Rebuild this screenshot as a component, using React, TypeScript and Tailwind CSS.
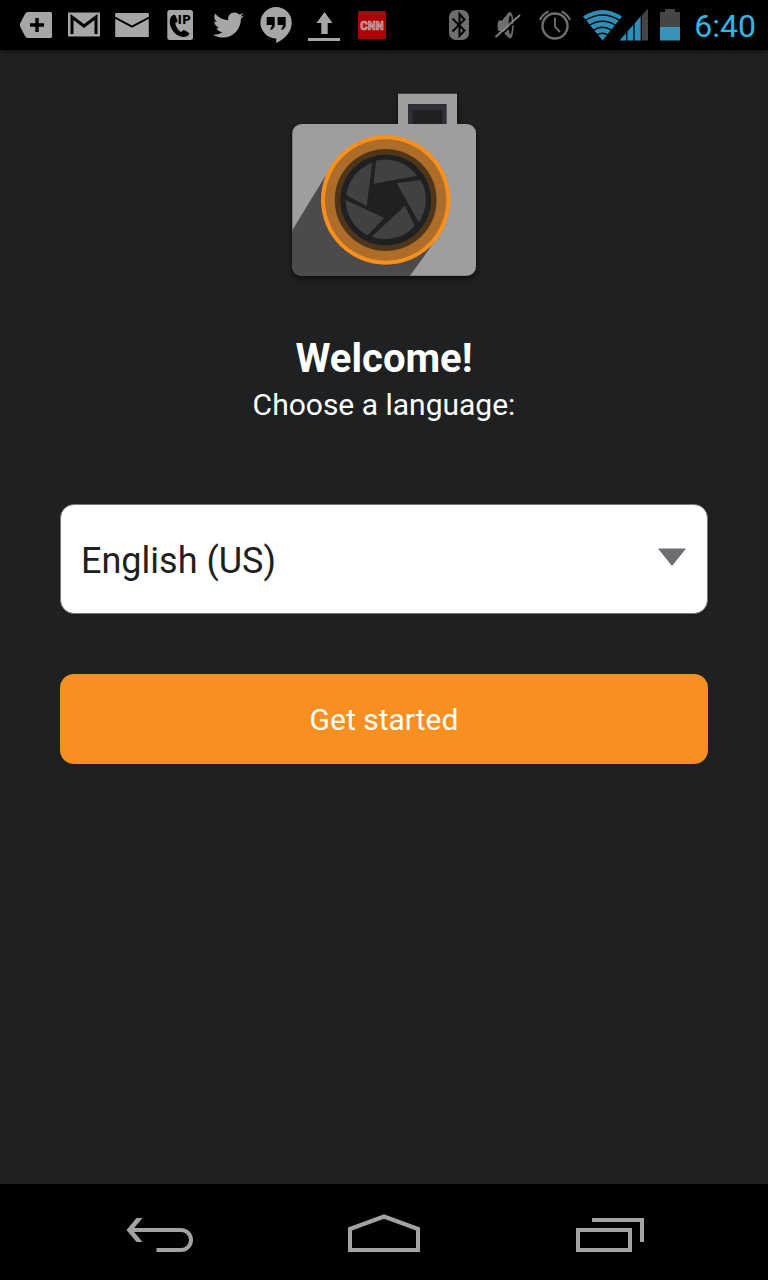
import { useState } from "react";
import type { ReactNode } from "react";
import { FaTwitter } from "react-icons/fa";

const LANGUAGES = ["English (US)", "English (UK)", "Español", "Français", "Deutsch"];

function StatusIcon({ label, children }: { label: string; children: ReactNode }) {
  return (
    <svg viewBox="0 0 48 50" className="h-[50px] w-12 shrink-0" role="img" aria-label={label}>
      {children}
    </svg>
  );
}

function StatusBar() {
  return (
    <header className="flex h-[50px] items-center justify-between bg-black px-3 shadow-md shadow-black/30">
      <div className="flex text-[#a6a6a6]">
        <StatusIcon label="Label added">
          <path d="M15.5 12H38.5Q40 12 40 13.5V36.500Q40 38 38.500 38H15.500Q14 38 13 36L8.300 27Q7.600 25 8.300 23L13 14Q14 12 15.500 12Z" fill="currentColor" />
          <path d="M25 18V32M18 25H32" stroke="#000" strokeWidth="3.400" />
        </StatusIcon>
        <StatusIcon label="Gmail">
          <rect x="8" y="12.500" width="32" height="24" fill="currentColor" />
          <path d="M12 34V17L24 26L36 17V34" fill="none" stroke="#000" strokeWidth="3" />
        </StatusIcon>
        <StatusIcon label="Mail">
          <rect x="7.200" y="13" width="33.600" height="24" fill="currentColor" />
          <path d="M7 17.700L24 26.600L41 17.700" fill="none" stroke="#000" strokeWidth="2" />
        </StatusIcon>
        <StatusIcon label="IP call">
          <rect x="11.300" y="10" width="25.700" height="30" rx="2.500" fill="currentColor" />
          <path d="M17.200 15C13.200 17 12.700 23 15.500 28.500C18.800 35 25 38.300 31 36.300L33 34.700Q33.800 33.600 32.600 32.700L28.700 30.200Q27.600 29.600 26.700 30.600L25.500 32C22.500 31 19.600 26.500 19.300 23L20.900 22.200Q21.900 21.600 21.500 20.400L19.600 15.800Q18.900 14.300 17.200 15Z" fill="#000" />
          <text x="21.500" y="24" fontSize="12" fontWeight="700" fill="#000" className="font-['DejaVu_Sans',sans-serif]">IP</text>
        </StatusIcon>
        <StatusIcon label="Twitter">
          <FaTwitter x="9" y="9.500" size={31} />
        </StatusIcon>
        <StatusIcon label="Hangouts">
          <path d="M24 7A15.700 15.700 0 0 1 39.700 22.700C39.700 31.500 33.500 38.500 24.300 43V38.400A15.700 15.700 0 0 1 24 7Z" fill="currentColor" />
          <path d="M14.700 17H22.700V25Q22.700 28.500 18.500 30V28.200Q20 27 20 25H14.700ZM25.600 17H33.700V25Q33.700 28.500 29.500 30V28.200Q31 27 31 25H25.600Z" fill="#000" />
        </StatusIcon>
        <StatusIcon label="Upload">
          <path d="M24.500 12L32.500 23H27.700V34H21.300V23H16.500ZM8 38H40V41H8Z" fill="currentColor" />
        </StatusIcon>
        <StatusIcon label="CNN">
          <rect x="10" y="11" width="28" height="28" rx="1.500" fill="#ad0000" />
          <text x="24" y="29.500" fontSize="13" fontWeight="700" textAnchor="middle" fill="#b07070" className="font-['Roboto_Condensed',Roboto,sans-serif]" stroke="#d0b0b0" strokeWidth="0.700">CNN</text>
        </StatusIcon>
      </div>
      <div className="flex items-center">
        <div className="flex text-[#6e6e6e]">
          <StatusIcon label="Bluetooth">
            <rect x="14" y="10" width="20" height="30" rx="7" fill="currentColor" />
            <path d="M17.500 18.500L29.500 30.500L24.500 36V14L29.500 19.500L17.500 31.500" fill="none" stroke="#000" strokeWidth="2" />
          </StatusIcon>
          <StatusIcon label="Muted">
            <path d="M15.500 20.500H19L25.500 12.500Q28 11 29.500 15Q32 25 29.500 35.500Q28 40 25.500 37.500L19 31H15.500Q13.500 26 15.500 20.500Z" fill="currentColor" />
            <ellipse cx="27.300" cy="25" rx="1.700" ry="9.500" fill="#000" />
            <path d="M14 38.500L39 16.500" stroke="#000" strokeWidth="1.600" />
            <path d="M12.500 37L37 15" stroke="#858585" strokeWidth="1.900" />
          </StatusIcon>
          <StatusIcon label="Alarm">
            <circle cx="24" cy="26" r="12.500" fill="none" stroke="currentColor" strokeWidth="2.400" />
            <path d="M24 17.500V27L29 32" fill="none" stroke="currentColor" strokeWidth="1.800" />
            <path d="M9 20Q11 14.500 17.500 11.500M39 20Q37 14.500 30.500 11.500" fill="none" stroke="currentColor" strokeWidth="2" />
          </StatusIcon>
        </div>
        <svg viewBox="579 0 74 50" className="h-[50px] w-[74px]" role="img" aria-label="Wi-Fi and signal strength">
          <path d="M583 16.500Q602.500 3.500 622 16.500L602.500 40.500Z" fill="#2c8fb8" />
          <path d="M585 20.500Q602.500 9.500 620 20.500M589 25.500Q602.500 17 616 25.500M593 30.500Q602.500 24 612 30.500M597 35Q602.500 31.500 608 35" fill="none" stroke="#000" strokeWidth="1.300" />
          <path d="M619.500 40.500L641 16V40.500Z" fill="#2c8fb8" />
          <path d="M642 15L648 8.500V40.500H642Z" fill="#444" />
          <path d="M626.800 20V41M634 15V41M641.300 10V41" stroke="#000" strokeWidth="1.200" />
        </svg>
        <svg viewBox="653 0 34 50" className="h-[50px] w-[34px]" role="img" aria-label="Battery half full">
          <path d="M665 9H675V12H680V27H660V12H665Z" fill="#454545" />
          <path d="M660 27H680V40.500H660Z" fill="#3793ba" />
        </svg>
        <time className="pt-0.5 pl-[7px] text-[32px] leading-[48px] text-[#33b5e5]">6:40</time>
      </div>
    </header>
  );
}

function CameraLogo() {
  return (
    <svg viewBox="12 30 600 600" className="size-[200px]" role="img" aria-label="Camera">
      <defs>
        <clipPath id="body">
          <rect x="36" y="131" width="553" height="457" rx="29" />
        </clipPath>
        <filter id="drop" x="-10%" y="-10%" width="120%" height="125%">
          <feDropShadow dx="0" dy="11" stdDeviation="9" floodColor="#000" floodOpacity="0.600" />
        </filter>
      </defs>
      <g filter="url(#drop)">
        <path d="M354 41H531V134H354Z" fill="#9e9e9e" />
        <rect x="37" y="132" width="551" height="455" rx="28" fill="#9e9e9e" />
      </g>
      <path d="M384 72H500V132H384Z" fill="#2f3037" />
      <path d="M398 90H486V132H398Z" fill="#1e2022" />
      <path d="M30 462L142 278L317 360L465 483L388 590H30Z" fill="#4d4a4b" clipPath="url(#body)" />
      <circle cx="317" cy="360" r="194" fill="#f7901e" />
      <circle cx="317" cy="360" r="182" fill="#ad6d29" />
      <circle cx="317" cy="360" r="153" fill="#4f351a" />
      <circle cx="317" cy="360" r="136" fill="#1e2022" />
      <g fill="#414042">
        <path d="M288 242A120 120 0 0 1 411 287L281 311Z" />
        <path d="M350 309L422 300A120 120 0 0 1 416 427Z" />
        <path d="M375 377L404 439A120 120 0 0 1 275 470Z" />
        <path d="M313 414L263 466A120 120 0 0 1 197 360Z" />
        <path d="M260 378L199 346A120 120 0 0 1 277 248Z" />
      </g>
    </svg>
  );
}

function NavButton({ label, viewBox, children }: { label: string; viewBox: string; children: ReactNode }) {
  return (
    <button type="button" aria-label={label} className="flex flex-1 items-center justify-center">
      <svg viewBox={viewBox} className="h-12 w-20" fill="none" stroke="#a3a3a3" strokeWidth="4">
        {children}
      </svg>
    </button>
  );
}

export default function App() {
  const [language, setLanguage] = useState(LANGUAGES[0]);

  return (
    <div className="flex min-h-screen flex-col bg-[#1e2022] font-[Roboto,sans-serif] text-white">
      <StatusBar />
      <main className="flex flex-1 flex-col px-[60px] pt-10">
        <div className="flex justify-center">
          <CameraLogo />
        </div>
        <h1 className="mt-11 text-center text-[40px] leading-[50px] font-bold">Welcome!</h1>
        <label htmlFor="language" className="mt-0.5 text-center text-[30px] leading-[38px]">
          Choose a language:
        </label>
        <div className="mt-20 grid items-center">
          <select
            id="language"
            value={language}
            onChange={(event) => setLanguage(event.target.value)}
            className="col-start-1 row-start-1 h-[110px] w-full appearance-none rounded-[14px] border border-[#77787b] bg-white px-5 pt-1 text-[36px] text-[#1e2022]"
          >
            {LANGUAGES.map((name) => (
              <option key={name}>{name}</option>
            ))}
          </select>
          <svg viewBox="0 0 28 24" className="pointer-events-none col-start-1 row-start-1 mr-[22px] h-6 w-7 justify-self-end" aria-hidden="true">
            <path d="M0 1.500H28L14 19Z" fill="#6d6e71" />
          </svg>
        </div>
        <button type="button" className="mt-[60px] h-[90px] rounded-[14px] bg-[#f79020] text-[30px]">
          Get started
        </button>
      </main>
      <nav aria-label="System" className="flex h-24 bg-black px-12">
        <NavButton label="Back" viewBox="120 1208 80 48">
          <path d="M130 1230H181A10 10 0 0 1 181 1250H156.500" />
          <path d="M136.500 1218H142.500L132.500 1230L142.500 1242H136.500L126.500 1230Z" fill="#a3a3a3" stroke="none" />
        </NavButton>
        <NavButton label="Home" viewBox="344 1208 80 48">
          <path d="M350 1250V1229L384 1216.500L418 1229V1250Z" />
        </NavButton>
        <NavButton label="Recent apps" viewBox="568 1208 80 48">
          <path d="M578 1230H630V1250H578ZM592 1220H642V1242" />
        </NavButton>
      </nav>
    </div>
  );
}
